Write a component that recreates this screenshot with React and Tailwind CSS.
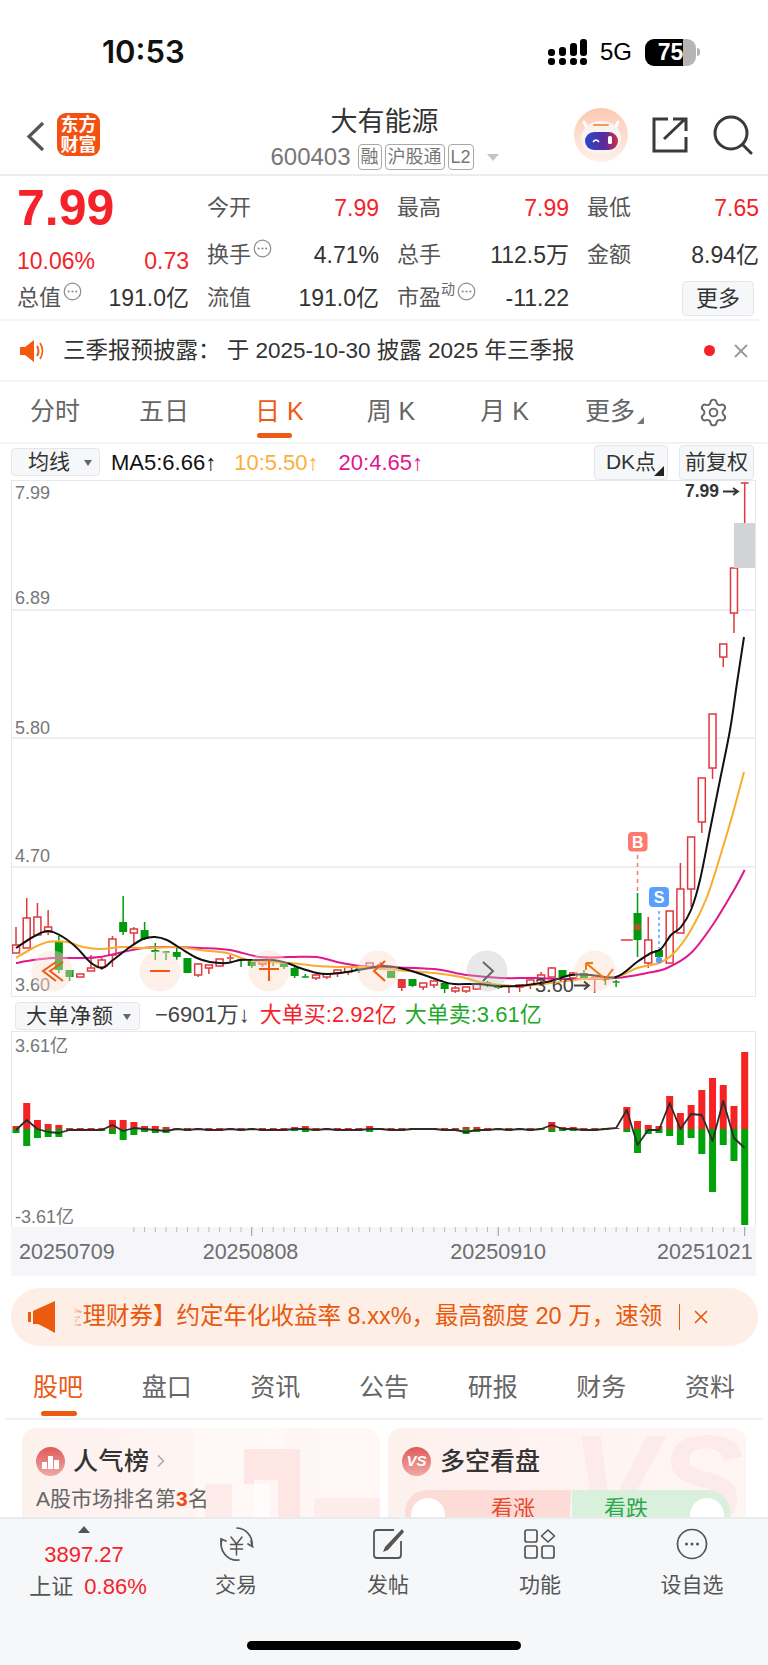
import React from "react";
import { Settings, X, ChevronRight } from "lucide-react";

const RED = "#e0383e";
const GREEN = "#019a0f";
const STEP = 10.716;
const xAt = (i) => 16 + STEP * i;

// [high, bodyTop, bodyBottom, low, colour] in page pixels; "f" is a filled red body, null is a gap
const candles = [
  [927, 945, 953, 953, "r"], [898, 918, 948, 948, "r"], [903, 917, 935, 935, "r"], [910, 927, 932, 935, "r"],
  [936, 942, 970, 973, "g"], [970, 970, 977, 981, "g"], [974, 974, 977, 977, "r"], [955, 968, 971, 971, "r"],
  [958, 960, 967, 970, "r"], [936, 939, 955, 967, "r"], [896, 922, 932, 935, "g"], [927, 929, 933, 945, "r"],
  [922, 930, 939, 940, "g"], [943, 950, 952, 960, "g"], [952, 952, 953, 960, "g"], [948, 952, 957, 960, "g"],
  [958, 958, 973, 973, "g"], [963, 964, 975, 977, "r"], [965, 965, 968, 974, "r"], [959, 959, 966, 966, "r"],
  [955, 958, 959, 962, "r"], [958, 960, 961, 967, "g"], [960, 961, 966, 968, "g"], [960, 961, 964, 967, "r"],
  [960, 961, 963, 966, "g"], [962, 963, 967, 969, "g"], [967, 968, 976, 978, "g"], [974, 977, 978, 978, "g"],
  [974, 975, 978, 980, "r"], [973, 974, 977, 979, "r"], [970, 970, 973, 977, "r"], [967, 967, 972, 975, "r"],
  [966, 968, 969, 973, "g"], [963, 963, 967, 969, "r"], [962, 965, 966, 970, "r"], [971, 971, 978, 978, "g"],
  [979, 979, 988, 991, "f"], [979, 979, 986, 987, "g"], [983, 983, 987, 990, "r"], [981, 981, 985, 988, "r"],
  [983, 983, 989, 993, "g"], [986, 988, 991, 993, "r"], [987, 987, 991, 993, "r"], [984, 984, 989, 989, "r"],
  [981, 983, 984, 987, "g"], [984, 985, 988, 989, "g"], [986, 986, 987, 993, "r"], [985, 985, 987, 992, "r"],
  [980, 980, 985, 989, "r"], [972, 975, 980, 982, "r"], [967, 968, 977, 977, "r"], [970, 970, 977, 978, "g"],
  [972, 973, 978, 978, "r"], [970, 973, 979, 980, "g"], [977, 977, 978, 993, "r"], [978, 979, 980, 985, "g"],
  [980, 982, 983, 987, "g"], [940, 940, 940.5, 941, "r"], [893, 913, 940, 957, "g"], [917, 940, 963, 968, "r"],
  [950, 950, 957, 957, "g"], [911, 911, 963, 963, "r"], [863, 889, 933, 933, "r"], [837, 837, 889, 907, "r"],
  [778, 778, 822, 833, "r"], [714, 714, 768, 779, "r"], [644, 644, 657, 667, "r"], [568, 568, 613, 633, "r"],
  [483, 483, 530, 530, "t"],
];

const ma5 = [
  [16, 948], [33, 937], [48, 931], [63, 937], [77, 948], [90, 962], [102, 968], [113, 960], [130, 947], [143, 939],
  [155, 937], [167, 940], [180, 948], [197, 958], [210, 962], [227, 963], [240, 960], [253, 960], [273, 960],
  [287, 963], [300, 968], [317, 973], [327, 974], [340, 973], [358, 970], [370, 968], [384, 966], [404, 969],
  [424, 975], [441, 981], [454, 984], [477, 984], [497, 986], [517, 986], [534, 984], [551, 981], [571, 975],
  [591, 975], [616, 977], [637, 962], [651, 953], [661, 949], [671, 935], [681, 927], [691, 910], [700, 880],
  [710, 830], [720, 780], [730, 730], [737, 683], [744, 637],
];
const ma10 = [
  [16, 958], [33, 948], [48, 942], [67, 942], [83, 947], [100, 949], [123, 947], [143, 948], [177, 947], [200, 950],
  [227, 953], [247, 960], [267, 962], [290, 963], [317, 966], [337, 967], [360, 967], [384, 969], [434, 973],
  [461, 977], [484, 983], [517, 986], [551, 983], [584, 979], [616, 977], [637, 968], [659, 963], [674, 953],
  [691, 930], [707, 897], [723, 847], [733, 813], [744, 772],
];
const ma20 = [
  [16, 963], [33, 960], [53, 958], [80, 958], [100, 957], [123, 952], [143, 948], [167, 947], [200, 948], [230, 950],
  [260, 957], [290, 957], [317, 957], [337, 962], [360, 966], [384, 967], [434, 969], [467, 975], [501, 978],
  [534, 978], [567, 979], [616, 978], [647, 973], [667, 968], [691, 953], [714, 923], [734, 890], [744.7, 870],
];

// buy and sell volume per day, in pixels from the zero line
const flows = [
  [3, 4], [26, 17], [9, 9], [5, 8], [4, 8], [1, 2], [1, 2], [1, 2], [1, 2], [9, 5], [9, 11], [7, 6], [3, 3], [3, 4],
  [2, 4], [1, 1], [1, 2], [1, 1], [1, 2], [1, 2], [1, 1], [1, 2], [1, 1], [1, 2], [1, 2], [1, 2], [2, 2], [3, 3],
  [1, 2], [1, 1], [1, 2], [1, 2], [1, 2], [3, 3], [1, 1], [1, 2], [1, 2], [1, 1], [1, 1], [1, 1], [1, 2], [1, 2],
  [2, 5], [2, 3], [1, 2], [1, 1], [1, 2], [1, 1], [1, 2], [1, 1], [7, 3], [2, 2], [2, 2], [1, 2], [1, 2], [1, 1],
  [1, 0], [22, 3], [8, 24], [4, 5], [3, 4], [33, 7], [16, 16], [24, 9], [39, 25], [51, 63], [44, 16], [23, 32], [77, 96],
];

const smooth = (pts) => {
  let d = `M${pts[0][0]} ${pts[0][1]}`;
  for (let i = 0; i < pts.length - 1; i++) {
    const p0 = pts[i - 1] || pts[i];
    const p1 = pts[i];
    const p2 = pts[i + 1];
    const p3 = pts[i + 2] || p2;
    d += ` C${p1[0] + (p2[0] - p0[0]) / 6} ${p1[1] + (p2[1] - p0[1]) / 6} ${p2[0] - (p3[0] - p1[0]) / 6} ${p2[1] - (p3[1] - p1[1]) / 6} ${p2[0]} ${p2[1]}`;
  }
  return d;
};

function Candle({ c, i }) {
  const x = xAt(i);
  const [high, top, bottom, low, kind] = c;
  if (kind === "t") {
    return (
      <g stroke={RED} strokeWidth="1.5">
        <path d={`M${x - 4} ${high}H${x + 4}M${x} ${high}V${low}`} fill="none" />
      </g>
    );
  }
  const color = kind === "g" ? GREEN : RED;
  const flat = bottom - top <= 1;
  const wide = i === 57 ? 6 : 3.5;
  return (
    <g>
      <path d={`M${x} ${high}V${top}M${x} ${bottom}V${low}`} stroke={color} strokeWidth="1.5" fill="none" />
      {flat ? (
        <path d={`M${x - wide} ${top}H${x + wide}`} stroke={color} strokeWidth="1.5" />
      ) : kind === "r" ? (
        <rect x={x - 3.5} y={top} width="7" height={bottom - top} fill="#fff" stroke={color} strokeWidth="1.5" />
      ) : (
        <rect x={x - 4} y={top} width="8" height={bottom - top} fill={color} />
      )}
    </g>
  );
}

function CandleChart() {
  const hints = [52, 160, 269, 378, 595];
  return (
    <div className="mx-[11px] h-[517px] w-[745px] border border-[#e6e8ef]">
      <svg className="block" width="743" height="515" viewBox="12 481 743 515" fontFamily="Liberation Sans">
        {[610, 738, 867].map((y) => (
          <line key={y} x1="12" x2="755" y1={y} y2={y} stroke="#e6e8ef" strokeWidth="1.5" />
        ))}
        <text x="15" y="499" fontSize="18" fill="#777">7.99</text>
        <text x="15" y="604" fontSize="18" fill="#777">6.89</text>
        <text x="15" y="734" fontSize="18" fill="#777">5.80</text>
        <text x="15" y="862" fontSize="18" fill="#777">4.70</text>
        <text x="15" y="991" fontSize="18" fill="#777">3.60</text>
        {candles.map((c, i) => (
          <Candle key={i} c={c} i={i} />
        ))}
        <rect x="734" y="523" width="22" height="45" fill="#d1d3d7" />
        <path d={smooth(ma20)} fill="none" stroke="#e0178f" strokeWidth="2" />
        <path d={smooth(ma10)} fill="none" stroke="#f9ab2c" strokeWidth="2" />
        <path d={smooth(ma5)} fill="none" stroke="#111" strokeWidth="2" />

        {hints.map((x) => (
          <circle key={x} cx={x} cy="971" r="20.5" fill="#fbdccb" fillOpacity="0.42" />
        ))}
        <circle cx="487" cy="971" r="20.5" fill="#bdbdbd" fillOpacity="0.35" />
        <g fill="none" stroke="#ee5a14" strokeWidth="2">
          <path d="M56 962L43 971L56 981M63 962L50 971L63 981" />
          <path d="M150 971H170" />
          <path d="M259 969H279M269 959V981" />
          <path d="M385 961L374 971L385 981" />
        </g>
        <path d="M483 962L493 971L483 981" fill="none" stroke="#666" strokeWidth="2" />
        <path d="M586 963H593M586 963V970M586 963L604 978M613 969L604 981" fill="none" stroke="#ee7a14" strokeWidth="2" />

        <text x="535" y="992" fontSize="20" fill="#444">3.60</text>
        <path d="M574 985.5H589M584 981.5L589 985.5L584 989.5" fill="none" stroke="#444" strokeWidth="1.8" />
        <text x="685" y="497" fontSize="17.5" fontWeight="600" fill="#333">7.99</text>
        <path d="M723 491.5H738M733 488L738 491.5L733 495" fill="none" stroke="#333" strokeWidth="1.8" />

        <rect x="628" y="832" width="19.5" height="19.5" rx="4" fill="#fd7a6e" />
        <text x="637.7" y="848" fontSize="16" fontWeight="700" fill="#fff" textAnchor="middle">B</text>
        <path d="M637.5 855V892" stroke="#fd7a6e" strokeWidth="1.5" strokeDasharray="4 4" />
        <rect x="649" y="887" width="20" height="20" rx="4" fill="#5aa0fb" />
        <text x="659" y="903" fontSize="16" fontWeight="700" fill="#fff" textAnchor="middle">S</text>
        <path d="M659 911V949" stroke="#5aa0fb" strokeWidth="1.5" strokeDasharray="3 3" />
        <circle cx="637.5" cy="927" r="3.5" fill="#a8591f" />
        <circle cx="659" cy="960" r="3.2" fill="#5aa0fb" />
      </svg>
    </div>
  );
}

function FlowChart() {
  const zero = 1129;
  const net = flows.map(([up, down], i) => `${xAt(i)},${zero - (up - down)}`).join(" ");
  return (
    <div className="mx-[11px] h-[196px] w-[745px] border-x border-t border-[#e6e8ef]">
      <svg className="block" width="743" height="195" viewBox="12 1032 743 195" fontFamily="Liberation Sans">
        <text x="15" y="1052" fontSize="18" fill="#777" fontFamily="Liberation Sans, Noto Sans CJK SC">3.61亿</text>
        <text x="15" y="1223" fontSize="18" fill="#777" fontFamily="Liberation Sans, Noto Sans CJK SC">-3.61亿</text>
        {flows.map(([up, down], i) => (
          <g key={i}>
            <rect x={xAt(i) - 3.5} y={zero - up} width="7" height={up} fill="#f52323" />
            <rect x={xAt(i) - 3.5} y={zero} width="7" height={down} fill="#01a20a" />
          </g>
        ))}
        <polyline points={net} fill="none" stroke="#2c2c2c" strokeWidth="1.8" strokeLinejoin="round" />
      </svg>
    </div>
  );
}

function DateAxis() {
  const ticks = [];
  for (let i = 11; i < 69; i++) ticks.push(i);
  return (
    <div className="mx-[11px] h-[49px] w-[745px] bg-[#f6f6fa]">
      <svg className="block" width="745" height="10" viewBox="11 1227 745 10">
        {ticks.map((i) => {
          const big = i === 22 || i === 45 || i === 68;
          return <line key={i} x1={xAt(i)} x2={xAt(i)} y1="1227" y2={big ? 1236 : 1232} stroke={big ? "#999" : "#bbb"} strokeWidth="1" />;
        })}
      </svg>
      <div className="mt-[2px] flex pl-[8px] text-[21.5px] leading-[26px] text-[#6d6d6d]">
        <span>20250709</span>
        <span className="ml-[88px]">20250808</span>
        <span className="ml-[152px]">20250910</span>
        <span className="ml-[111px]">20251021</span>
      </div>
    </div>
  );
}

const Dots = () => (
  <svg className="inline-block" width="19" height="19" viewBox="0 0 19 19" fill="none" stroke="#8c8c8c" strokeWidth="1.2">
    <circle cx="9.5" cy="9.5" r="8.3" />
    <g fill="#8c8c8c" stroke="none">
      <circle cx="5.7" cy="9.5" r="1.1" /><circle cx="9.5" cy="9.5" r="1.1" /><circle cx="13.3" cy="9.5" r="1.1" />
    </g>
  </svg>
);

function Stat({ label, value, red, info, sup }) {
  return (
    <div className="flex items-center justify-between">
      <span className="relative flex items-start text-[22px] leading-[28px] text-[#555]">
        {label}
        {sup && <span className="-mt-[3px] text-[14px] leading-[16px] text-[#666]">{sup}</span>}
        {info && <span className="-mt-[2px] ml-[2px] flex"><Dots /></span>}
      </span>
      <span className={`text-[23px] leading-[28px] ${red ? "text-[#f5222a]" : "text-[#333]"}`}>{value}</span>
    </div>
  );
}

const Tag = ({ children }) => (
  <span className="flex h-[26px] items-center rounded-[4px] border border-[#a8a8a8] px-[2px] text-[18px] leading-none text-[#777]">
    {children}
  </span>
);

const BoxButton = ({ children, className }) => (
  <div className={`relative flex items-center justify-center rounded-[4px] border border-[#e4e6ec] bg-[#f6f7f9] text-[#333] ${className}`}>
    {children}
  </div>
);

const Robot = () => (
  <svg width="54" height="54" viewBox="0 0 54 54">
    <defs>
      <linearGradient id="halo" x1="0" y1="0" x2="0" y2="1">
        <stop offset="0" stopColor="#fcc9b2" />
        <stop offset="1" stopColor="#fff1ea" />
      </linearGradient>
      <linearGradient id="visor" x1="0" y1="0" x2="1" y2="0">
        <stop offset="0" stopColor="#2b47c9" />
        <stop offset="0.6" stopColor="#5a2a9c" />
        <stop offset="1" stopColor="#d42c4a" />
      </linearGradient>
    </defs>
    <circle cx="27" cy="27" r="27" fill="url(#halo)" />
    <path d="M10 14L14 22M44 14L40 22" stroke="#fff" strokeWidth="3" strokeLinecap="round" />
    <ellipse cx="27" cy="30" rx="20" ry="17" fill="#f6f3f1" />
    <path d="M20 17H34" stroke="#f59a56" strokeWidth="2" strokeLinecap="round" />
    <rect x="11" y="24" width="33" height="18" rx="9" fill="url(#visor)" />
    <path d="M19 34Q22 30 25 34" stroke="#fff" strokeWidth="1.6" fill="none" />
    <rect x="34" y="28" width="4" height="8" rx="1.5" fill="#fff" />
  </svg>
);

const Speaker = () => (
  <svg width="24" height="26" viewBox="0 0 24 26" fill="#f4590f">
    <path d="M0 9H5L14 2V24L5 17H0Z" />
    <path d="M17 8Q20 13 17 18" fill="none" stroke="#f4590f" strokeWidth="2" />
    <path d="M20 5Q25 13 20 21" fill="none" stroke="#f4590f" strokeWidth="1.6" />
  </svg>
);

const Megaphone = () => (
  <svg width="28" height="34" viewBox="0 0 28 34" fill="#ec5a0e">
    <rect x="0" y="12" width="3" height="10" />
    <path d="M5 11L27 1V33L18 28L10 24H5Z" />
  </svg>
);

const bottomIcons = {
  trade: (
    <svg width="38" height="36" viewBox="0 0 38 36" fill="none" stroke="#555" strokeWidth="1.7" strokeLinecap="round">
      <path d="M20 2A16 16 0 0 1 35 20M34 15L35.5 20.5L31 18" />
      <path d="M22 34A16 16 0 0 1 5 13M4 19L4 13L9 15" />
      <path d="M14 11L19.5 18L25 11M13.5 18.5H25.5M13.5 23H25.5M19.5 18V29" strokeWidth="1.5" />
    </svg>
  ),
  post: (
    <svg width="34" height="34" viewBox="0 0 34 34" fill="none" stroke="#555" strokeWidth="1.8" strokeLinejoin="round">
      <path d="M23 3H6A3 3 0 0 0 3 6V28A3 3 0 0 0 6 31H27A3 3 0 0 0 30 28V14" />
      <path d="M31 2L14 20L12 25L17 23L33 5Z" fill="#555" stroke="none" />
    </svg>
  ),
  tools: (
    <svg width="32" height="30" viewBox="0 0 32 30" fill="none" stroke="#555" strokeWidth="1.7">
      <rect x="1" y="1" width="12" height="12" rx="2" />
      <rect x="1" y="17" width="12" height="12" rx="2" />
      <rect x="18" y="17" width="12" height="12" rx="2" />
      <path d="M24 1L30.5 7L24 13L17.5 7Z" strokeLinejoin="round" />
    </svg>
  ),
  add: (
    <svg width="32" height="32" viewBox="0 0 32 32" fill="none" stroke="#555" strokeWidth="1.7">
      <circle cx="16" cy="16" r="14.5" />
      <g fill="#555" stroke="none">
        <circle cx="10.5" cy="16" r="1.5" /><circle cx="16" cy="16" r="1.5" /><circle cx="21.5" cy="16" r="1.5" />
      </g>
    </svg>
  ),
};

const BottomItem = ({ icon, label }) => (
  <div className="flex flex-col items-center">
    <div className="flex h-[36px] items-center">{icon}</div>
    <span className="mt-[9px] text-[21px] leading-[28px] text-[#555]">{label}</span>
  </div>
);

export default function App() {
  const chartTabs = ["分时", "五日", "日 K", "周 K", "月 K"];
  const chartTabLeft = ["ml-[30px]", "ml-[59px]", "ml-[66px]", "ml-[63px]", "ml-[65px]"];
  const infoTabs = ["股吧", "盘口", "资讯", "公告", "研报", "财务", "资料"];

  return (
    <div className="flex h-[1665px] w-[768px] flex-col overflow-hidden bg-white font-['Liberation_Sans','Noto_Sans_CJK_SC',sans-serif]">
      {/* status bar */}
      <div className="flex h-[108px] items-start justify-between pt-[33px]">
        <span className="ml-[102px] text-[31px] font-semibold leading-[38px] text-[#111] font-['Inter','Liberation_Sans',sans-serif]">10:53</span>
        <div className="mr-[68px] flex h-[38px] items-center">
          <svg width="42" height="26" viewBox="0 0 42 26" fill="#000">
            <rect x="1" y="10" width="7" height="7" rx="3" /><rect x="1" y="19" width="7" height="7" rx="3" />
            <rect x="12" y="8" width="7" height="9" rx="3" /><rect x="12" y="19" width="7" height="7" rx="3" />
            <rect x="23" y="4" width="7" height="13" rx="3" /><rect x="23" y="19" width="7" height="7" rx="3" />
            <rect x="33" y="0" width="7" height="17" rx="3" /><rect x="33" y="19" width="7" height="7" rx="3" />
          </svg>
          <span className="ml-[11px] text-[24px] font-medium leading-none text-black">5G</span>
          <div className="ml-[13px] flex h-[27px] w-[51px] items-center justify-center rounded-[9px] bg-[linear-gradient(90deg,#000_75%,#b5b5b5_75%)] text-[23px] font-bold leading-none text-white">
            75
          </div>
          <div className="ml-[1px] h-[8px] w-[3px] rounded-r-full bg-[#b5b5b5]" />
        </div>
      </div>

      {/* stock title bar */}
      <div className="flex h-[68px] shrink-0 items-start border-b-2 border-[#ececec]">
        <svg className="ml-[26px] mt-[13px]" width="19" height="31" viewBox="0 0 19 31" fill="none" stroke="#555" strokeWidth="3.2">
          <path d="M17 2L3 15.5L17 29" />
        </svg>
        <div className="ml-[12px] mt-[5px] flex h-[43px] w-[43px] flex-col items-center justify-center rounded-[9px] bg-[#f4500f] text-[18px] font-bold leading-[20px] text-white">
          <span>东方</span>
          <span>财富</span>
        </div>
        <div className="ml-[170px] flex w-[229px] flex-col items-center">
          <span className="text-[27px] leading-[28px] text-[#333]">大有能源</span>
          <div className="mt-[8px] flex items-center gap-[3px]">
            <span className="mr-[4px] text-[24px] leading-[26px] text-[#777]">600403</span>
            <Tag>融</Tag>
            <Tag>沪股通</Tag>
            <Tag>L2</Tag>
            <span className="ml-[10px] h-0 w-0 border-x-[6px] border-t-[7px] border-x-transparent border-t-[#c4c4c4]" />
          </div>
        </div>
        <div className="ml-[75px] flex">
          <Robot />
          <svg className="ml-[23px] mt-[8px]" width="38" height="38" viewBox="0 0 38 38" fill="none" stroke="#3a3a3a" strokeWidth="3">
            <path d="M17 3H3V35H35V21M13 23L33 4M22 3H35V15" />
          </svg>
          <svg className="ml-[24px] mt-[7px]" width="40" height="40" viewBox="0 0 40 40" fill="none" stroke="#3a3a3a" strokeWidth="3">
            <circle cx="18" cy="18" r="16" />
            <path d="M30 30L38 38" strokeLinecap="round" />
          </svg>
        </div>
      </div>

      {/* quote block */}
      <div className="grid h-[145px] w-[759px] shrink-0 grid-cols-4 grid-rows-[50px_43px_43px] gap-x-[18px] border-b-2 border-[#f3f3f3] pl-[17px] pt-[7px]">
        <span className="text-[50px] font-bold leading-[50px] text-[#f5222a]">7.99</span>
        <Stat label="今开" value="7.99" red />
        <Stat label="最高" value="7.99" red />
        <Stat label="最低" value="7.65" red />
        <div className="flex items-end justify-between text-[23px] leading-[30px] text-[#f5222a]">
          <span>10.06%</span>
          <span>0.73</span>
        </div>
        <Stat label="换手" value="4.71%" info />
        <Stat label="总手" value="112.5万" />
        <Stat label="金额" value="8.94亿" />
        <Stat label="总值" value="191.0亿" info />
        <Stat label="流值" value="191.0亿" />
        <Stat label="市盈" sup="动" value="-11.22" info />
        <div className="flex justify-end">
          <BoxButton className="mt-[5px] mr-[5px] h-[35px] w-[72px] text-[22px]">更多</BoxButton>
        </div>
      </div>

      {/* announcement */}
      <div className="flex h-[61px] shrink-0 items-center border-b-2 border-[#f5f5f5]">
        <span className="ml-[20px] flex"><Speaker /></span>
        <span className="ml-[19px] text-[22.5px] text-[#333]">三季报预披露： 于 2025-10-30 披露 2025 年三季报</span>
        <span className="ml-auto h-[11px] w-[11px] rounded-full bg-[#f5222a]" />
        <X className="ml-[15px] mr-[16px] text-[#999]" size={22} strokeWidth={2} />
      </div>

      {/* period tabs */}
      <div className="relative flex h-[62px] shrink-0 items-center border-b-2 border-[#f3f3f3] text-[25px] text-[#666]">
        {chartTabs.map((t, i) => (
          <span key={t} className={`${chartTabLeft[i]} ${i === 2 ? "relative text-[#ee5a14]" : ""}`}>
            {t}
            {i === 2 && <span className="absolute left-[2px] top-[40px] h-[5px] w-[35px] rounded-full bg-[#ee5a14]" />}
          </span>
        ))}
        <span className="ml-[56px]">更多</span>
        <span className="ml-[2px] mt-[16px] h-0 w-0 border-b-[7px] border-l-[7px] border-b-[#777] border-l-transparent" />
        <Settings className="ml-auto mr-[39px] text-[#666]" size={31} strokeWidth={1.5} />
      </div>

      {/* moving-average legend */}
      <div className="flex h-[36px] shrink-0 items-center text-[22px]">
        <BoxButton className="ml-[11px] h-[28px] w-[89px] justify-start pl-[16px] text-[21px]">
          均线
          <span className="absolute right-[7px] top-[11px] h-0 w-0 border-x-[4px] border-t-[6px] border-x-transparent border-t-[#666]" />
        </BoxButton>
        <span className="ml-[11px] text-[#111]">MA5:6.66↑</span>
        <span className="ml-[18px] text-[#fbb03b]">10:5.50↑</span>
        <span className="ml-[20px] text-[#e0178f]">20:4.65↑</span>
        <BoxButton className="ml-auto h-[35px] w-[74px] text-[21px]">
          DK点
          <span className="absolute bottom-[3px] right-[3px] h-0 w-0 border-b-[10px] border-l-[10px] border-b-[#222] border-l-transparent" />
        </BoxButton>
        <BoxButton className="ml-[11px] mr-[14px] h-[35px] w-[75px] text-[21px]">前复权</BoxButton>
      </div>

      <CandleChart />

      {/* big-order legend */}
      <div className="flex h-[34px] shrink-0 items-center text-[22px]">
        <BoxButton className="ml-[15px] mt-[3px] h-[28px] w-[125px] justify-start pl-[10px] text-[21px] tracking-[1px]">
          大单净额
          <span className="absolute right-[8px] top-[11px] h-0 w-0 border-x-[4px] border-t-[6px] border-x-transparent border-t-[#666]" />
        </BoxButton>
        <span className="ml-[15px] text-[#444]">−6901万↓</span>
        <span className="ml-[10px] text-[#f5222a]">大单买:2.92亿</span>
        <span className="ml-[8px] text-[#1eaa28]">大单卖:3.61亿</span>
      </div>

      <FlowChart />
      <DateAxis />

      {/* promo banner */}
      <div className="ml-[11px] mt-[12px] flex h-[58px] w-[747px] shrink-0 items-center rounded-[29px] bg-[#fdeee6] text-[#e8590c]">
        <span className="ml-[17px] flex"><Megaphone /></span>
        <div className="relative ml-[17px] w-[590px] overflow-hidden whitespace-nowrap text-[23.5px]">
          <span className="-ml-[14px] block">金理财券】约定年化收益率 8.xx%，最高额度 20 万，速领&gt;</span>
          <span className="absolute inset-y-0 left-0 w-[14px] bg-gradient-to-r from-[#fdeee6] to-transparent" />
        </div>
        <span className="ml-[16px] h-[26px] w-[1px] bg-[#e8590c]" />
        <X className="ml-[10px]" size={22} strokeWidth={1.8} />
      </div>

      {/* detail tabs */}
      <div className="mx-[5px] mt-[11px] flex h-[63px] shrink-0 items-center justify-between border-b-2 border-[#f1f1f1] pl-[28px] pr-[28px] text-[25px] text-[#666]">
        {infoTabs.map((t, i) => (
          <span key={t} className={i === 0 ? "relative text-[#ee5a14]" : ""}>
            {t}
            {i === 0 && <span className="absolute left-[8px] top-[42px] h-[5px] w-[36px] rounded-full bg-[#ee5a14]" />}
          </span>
        ))}
      </div>

      {/* feed cards, cut off by the bottom bar */}
      <div className="flex h-[97px] shrink-0 gap-[8px] overflow-hidden pl-[22px] pt-[8px]">
        <div className="relative h-[120px] w-[358px] overflow-hidden rounded-t-[14px] bg-gradient-to-r from-[#fdf1ee] to-[#fff8f6]">
          <svg className="absolute left-0 top-0" width="358" height="120" viewBox="0 0 358 120">
            <rect x="172" y="0" width="90" height="120" fill="#fff" fillOpacity="0.35" />
            <rect x="222" y="21" width="56" height="99" fill="#fde6e3" />
            <rect x="221" y="56" width="27" height="64" fill="#fff8f6" />
            <rect x="232" y="52" width="24" height="68" fill="#fff" fillOpacity="0.6" />
            <rect x="183" y="56" width="27" height="64" fill="#fdecea" />
            <rect x="292" y="70" width="66" height="50" fill="#fdecea" />
          </svg>
          <div className="relative ml-[14px] mt-[18px] flex items-center">
            <svg width="29" height="29" viewBox="0 0 29 29">
              <defs>
                <linearGradient id="badgeA" x1="0" y1="0" x2="0" y2="1">
                  <stop offset="0" stopColor="#dd5a58" /><stop offset="1" stopColor="#efa9a6" />
                </linearGradient>
              </defs>
              <circle cx="14.5" cy="14.5" r="14.5" fill="url(#badgeA)" />
              <path d="M6 15H11V22H6ZM12 9H17V22H12ZM18 13H23V22H18Z" fill="#fff" />
            </svg>
            <span className="ml-[8px] text-[25px] font-medium leading-[30px] tracking-[0.5px] text-[#333]">人气榜</span>
            <ChevronRight className="ml-[1px] text-[#aaa]" size={20} strokeWidth={2} />
          </div>
          <p className="relative ml-[14px] mt-[10px] text-[21px] leading-[26px] text-[#666]">
            A股市场排名第<span className="font-bold text-[#ee4a14]">3</span>名
          </p>
        </div>

        <div className="relative h-[120px] w-[358px] overflow-hidden rounded-t-[14px] bg-gradient-to-r from-[#fdf1ee] to-[#fff6f4]">
          <span className="absolute right-[2px] top-[-22px] text-[130px] font-bold italic leading-[150px] text-[#fdeaea]">VS</span>
          <div className="relative ml-[14px] mt-[18px] flex items-center">
            <span className="flex h-[29px] w-[29px] items-center justify-center rounded-full bg-gradient-to-b from-[#dd5a58] to-[#efa9a6] text-[15px] font-bold italic text-white">VS</span>
            <span className="ml-[9px] text-[25px] font-medium leading-[30px] text-[#333]">多空看盘</span>
          </div>
          <div className="relative ml-[17px] mt-[14px] flex h-[40px] w-[325px]">
            <div className="relative flex h-full w-[166px] justify-center overflow-hidden rounded-tl-[22px] bg-[#fddbd7] pl-[50px] pt-[2px] text-[22px] text-[#e8482e] [clip-path:polygon(0_0,100%_0,99%_100%,0_100%)]">
              看涨
              <span className="absolute left-[6px] top-[8px] h-[34px] w-[34px] rounded-full bg-white" />
            </div>
            <div className="relative ml-[1px] flex h-full w-[158px] justify-center overflow-hidden rounded-tr-[22px] bg-[#d8f0dc] pr-[50px] pt-[2px] text-[22px] text-[#2fa84a]">
              看跌
              <span className="absolute right-[6px] top-[8px] h-[34px] w-[34px] rounded-full bg-white" />
            </div>
          </div>
        </div>
      </div>

      {/* bottom toolbar */}
      <div className="flex h-[148px] shrink-0 flex-col border-t-2 border-[#e9ebee] bg-[#f6f7f9]">
        <div className="grid grid-cols-[repeat(5,152px)] pl-[8px] pt-[7px]">
          <div className="flex flex-col items-center">
            <span className="h-0 w-0 border-x-[6px] border-b-[7px] border-x-transparent border-b-[#555]" />
            <span className="mt-[8px] text-[22px] leading-[28px] text-[#f5222a]">3897.27</span>
            <div className="ml-[8px] mt-[4px] flex whitespace-nowrap text-[22px] leading-[28px]">
              <span className="text-[#555]">上证</span>
              <span className="ml-[11px] text-[#f5222a]">0.86%</span>
            </div>
          </div>
          <BottomItem icon={bottomIcons.trade} label="交易" />
          <BottomItem icon={bottomIcons.post} label="发帖" />
          <BottomItem icon={bottomIcons.tools} label="功能" />
          <BottomItem icon={bottomIcons.add} label="设自选" />
        </div>
        <div className="mx-auto mt-auto mb-[15px] h-[9px] w-[274px] rounded-full bg-black" />
      </div>
    </div>
  );
}
